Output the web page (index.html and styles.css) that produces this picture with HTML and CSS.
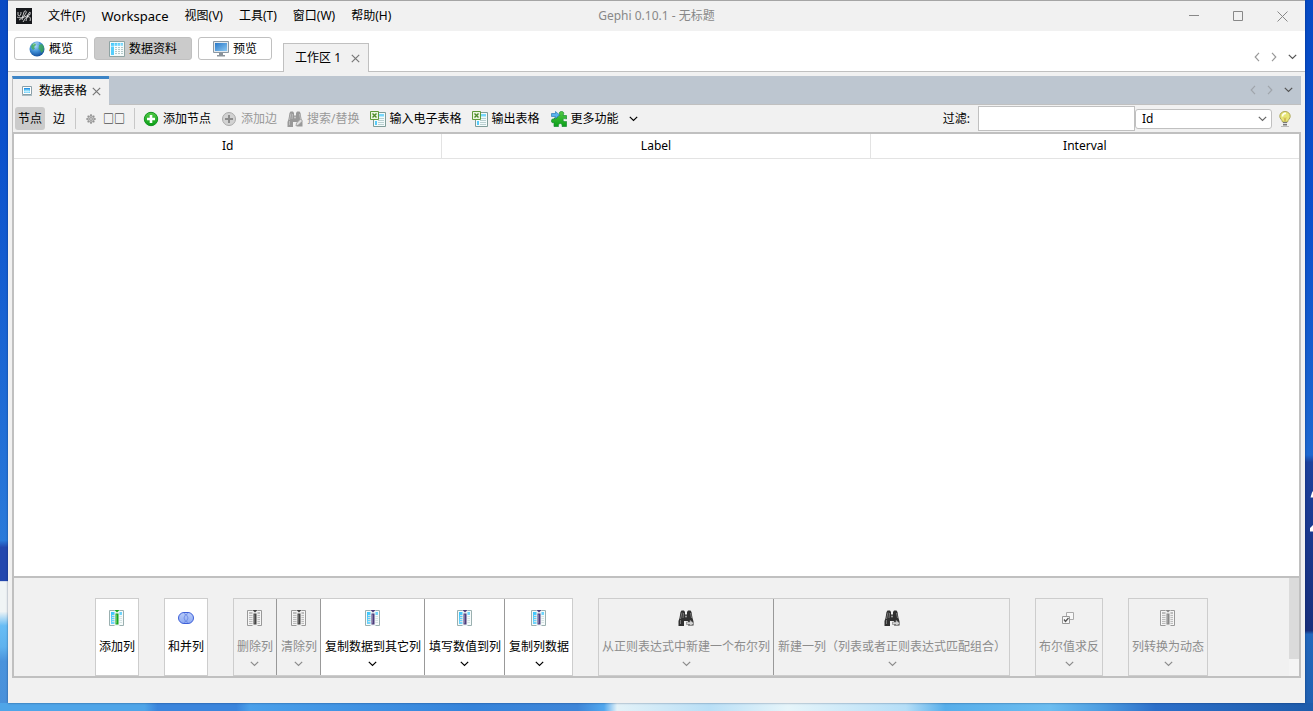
FILE: index.html
```html
<!DOCTYPE html>
<html lang="zh-CN">
<head>
<meta charset="utf-8">
<meta name="viewport" content="width=device-width, initial-scale=1">
<title>Gephi 0.10.1 - 无标题</title>
<link rel="stylesheet" href="styles.css">
</head>
<body>
<svg class="defs" aria-hidden="true">
  <defs>
    <linearGradient id="cyan" x1="0" y1="0" x2="1" y2="1"><stop offset="0" stop-color="#35c3fb"/><stop offset="1" stop-color="#a5e4fd"/></linearGradient>
    <radialGradient id="globe" cx=".4" cy=".3" r=".75"><stop offset="0" stop-color="#a9d8f8"/><stop offset=".5" stop-color="#3f8fd6"/><stop offset="1" stop-color="#0d4797"/></radialGradient>
    <linearGradient id="green" x1="0" y1="0" x2="0" y2="1"><stop offset="0" stop-color="#52c945"/><stop offset="1" stop-color="#0a9f18"/></linearGradient>
    <linearGradient id="screen" x1="0" y1="0" x2="1" y2="1"><stop offset="0" stop-color="#2878c8"/><stop offset="1" stop-color="#8cc8f2"/></linearGradient>
    <linearGradient id="venn" x1="0" y1="0" x2="0" y2="1"><stop offset="0" stop-color="#b9ccfa"/><stop offset="1" stop-color="#8daaf2"/></linearGradient>
  </defs>
  <symbol id="i-chev" viewBox="0 0 9 6"><path d="M.8.8 4.5 4.5 8.2.8" fill="none" stroke="currentColor" stroke-width="1.2"/></symbol>
  <symbol id="i-left" viewBox="0 0 6 10"><path d="M5 .8 1.2 5 5 9.2" fill="none" stroke="currentColor" stroke-width="1.2"/></symbol>
  <symbol id="i-right" viewBox="0 0 6 10"><path d="M1 .8 4.8 5 1 9.2" fill="none" stroke="currentColor" stroke-width="1.2"/></symbol>
  <symbol id="i-x" viewBox="0 0 9 9"><path d="M.8.8 8.2 8.2M8.2.8.8 8.2" fill="none" stroke="currentColor" stroke-width="1.2"/></symbol>
  <symbol id="i-table" viewBox="0 0 16 16">
    <path d="M.5.5h15v15H.5z" fill="#f4fafa" stroke="#8fa3a3"/><path d="M2 2h12v3H2z" fill="url(#cyan)"/><path d="M2 5h3v9H2z" fill="#55cdfb"/>
    <path d="M6 6.500h2M9 6.500h2M12 6.500h2M6 8.500h2M9 8.500h2M12 8.500h2M6 10.500h2M9 10.500h2M12 10.500h2M6 12.500h2M9 12.500h2M12 12.500h2" stroke="#b3c9cb"/><path d="M2 5.500h12M5.500 2v12M8.500 2v12M11.500 2v12" stroke="#fff" stroke-opacity=".5"/>
  </symbol>
  <symbol id="i-globe" viewBox="0 0 16 16"><circle cx="8" cy="8" r="7.5" fill="url(#globe)"/><path d="M2 6c0-2 2-4 4-4l1 2-2 2 1 1.500L4 9zM10 4l3-1 2 3-.5 4-2 2-1.500-3-1.500-1z" fill="#3fae42" fill-opacity=".7"/><path d="M4 3.500Q7 1 10 2" fill="none" stroke="#fff" stroke-opacity=".45"/></symbol>
  <symbol id="i-monitor" viewBox="0 0 16 16"><path d="M.5.5h15v11H.5z" fill="#e4e9ed" stroke="#8b98a3"/><path d="M2 2h12v8H2z" fill="url(#screen)"/><path d="M6 12h4v2h2v1.500H4V14h2z" fill="#8b939a"/></symbol>
  <symbol id="i-small-table" viewBox="0 0 10 10"><path d="M.5.5h9v8h-9z" fill="#fff" stroke="#8a9fa8"/><path d="M2 2h6v5H2z" fill="#6ad0fa"/><path d="M2 2h6v1.500H2z" fill="#2793e6"/><path d="M2 5.500h6M4 3.500v4M6 3.500v4" stroke="#eafaff" stroke-width=".6"/><path d="M0 9.500h10" stroke="#a9bbc0"/></symbol>
  <symbol id="i-gear" viewBox="0 0 10 10"><path d="M5 .3v9.400M.3 5h9.400M1.700 1.700l6.600 6.600M8.300 1.700 1.700 8.300" stroke="#8a8a8a" stroke-width="1.500"/><circle cx="5" cy="5" r="3.300" fill="#c6c6c6" stroke="#8a8a8a" stroke-width=".7"/><circle cx="5" cy="5" r="1.300" fill="#f3f3f3" stroke="#777" stroke-width=".7"/></symbol>
  <symbol id="i-plus" viewBox="0 0 16 16"><circle cx="8" cy="8" r="6.700" fill="url(#green)" stroke="#139421"/><path d="M8 4v8M4 8h8" stroke="#fff" stroke-width="2.600"/></symbol>
  <symbol id="i-plus-off" viewBox="0 0 16 16"><circle cx="8" cy="8" r="6.500" fill="#d2d2d2" stroke="#aaa"/><path d="M8 4v8M4 8h8" stroke="#8c8c8c" stroke-width="2"/></symbol>
  <symbol id="i-bino" viewBox="0 0 16 16">
    <path d="M2.500 2 3.500.5h2.500L7 2v2.500h2V2L10 .5h2.500l1 1.500 1 6 1 3.500V15.500H10V11H6v5H.5v-5l1-3z" fill="currentColor"/><path d="M4 2.500 2.500 9M12.500 3 13.500 8M2.500 10v4M5.500 3 5 8" fill="none" stroke="#fff" stroke-opacity=".35"/><circle cx="8" cy="6.500" r="1" fill="#eee" fill-opacity=".6"/>
  </symbol>
  <symbol id="i-pencil" viewBox="0 0 16 16"><path d="m9 15 .5-3 4-4 2 2-4 4z" fill="#e0e0e0" stroke="#999" stroke-width=".8"/></symbol>
  <symbol id="i-arrow" viewBox="0 0 16 16"><path d="M8.500 12h3.500v-2l4 3.500-4 2.500v-1.500H8.500z" fill="#d2d2d2" stroke="#777" stroke-width=".6"/></symbol>
  <symbol id="i-sheet" viewBox="0 0 16 16">
    <path d="M3.500 1.500h12v14h-12z" fill="#f3fbfb" stroke="#7f9c98"/><path d="M9 3h5v2.500H9z" fill="#77d6fb"/><path d="M5 10h2v4H5z" fill="#58cbf9"/><path d="M8 7.500h6M8 9.500h6M8 11.500h6M8 13.500h6" stroke="#b9cfd0"/>
    <path d="M.5.5h8v8h-8z" fill="#e9f5df" stroke="#5e9a3a"/><path d="m2.500 2.500 4 4M6.500 2.500l-4 4" stroke="#4e8b2c" stroke-width="1.400"/>
  </symbol>
  <symbol id="i-puzzle" viewBox="0 0 16 16"><path d="M6 4.500h3C7.500 2 8.500.5 10.500.5s3 1.500 1.500 4h3.500v3.500c-2.500-1-3.500 0-3.500 1s1 2 3.500 1.500v5H11c.5-2-.5-3-1.700-3s-2.300 1-1.800 3H3v-4c-2 .5-2.500 0-2.500-1.500S1 7.500 3 8.500V7h3z" fill="url(#green)" stroke="#168b32" stroke-width=".7"/><path d="M.5 2.500h4V.500l4 3.500-4 3.500v-2h-4z" fill="#58b3ee" stroke="#2978b8" stroke-width=".7"/></symbol>
  <symbol id="i-bulb" viewBox="0 0 12 16"><path d="M6 .5C2.800.5.8 2.700.8 5.300c0 2.500 2.200 3.200 2.700 5.700h5c.5-2.500 2.700-3.200 2.700-5.700C11.200 2.700 9.200.5 6 .5z" fill="#e8e676" stroke="#aaa456"/><path d="M3.500 5.500C3.500 3.500 5 2 7 2.500" fill="none" stroke="#fffff0" stroke-width="1.600"/><path d="M5 6.500 6 10l1-3.500" fill="none" stroke="#c69e45" stroke-width=".7"/><path d="M4 11h4v3.500H4z" fill="#777"/><path d="M4 12.500h4" stroke="#ddd"/><path d="M2 15.500h8" stroke="#bbb"/></symbol>
  <symbol id="i-col" viewBox="0 0 16 16"><path d="M.5.5h14v15H.5z" fill="#f6fbfb" stroke="#9bb0b0"/><path d="M2 2h4v12H2zM10 2h3v3h-3z" fill="url(#cyan)"/><path d="M3 5.500h3M3 7.500h3M3 9.500h3M3 11.500h3M10 6.500h3M10 8.500h3M10 10.500h3M10 12.500h3" stroke="#d5e3e3"/><path d="M5.500 0h5v16h-5z" fill="#edf4f4"/><path d="M6.500 3.500h3v11h-3z" fill="currentColor"/><path d="M5.500 0h5L8 2.500z" fill="currentColor"/><path d="M7.500 4.500v9" stroke="#fff" stroke-opacity=".3"/></symbol>
  <symbol id="i-col-off" viewBox="0 0 16 16"><path d="M.5.5h14v15H.5z" fill="#f6f6f6" stroke="#999"/><path d="M2 2h4v12H2zM10 2h3v12h-3z" fill="#bcbcbc"/><path d="M2 4.500h4M2 6.500h4M2 8.500h4M2 10.500h4M2 12.500h4M10 4.500h3M10 6.500h3M10 8.500h3M10 10.500h3M10 12.500h3" stroke="#eee"/><path d="M5.500 0h5v16h-5z" fill="#ededed"/><path d="M6.500 3.500h3v11h-3z" fill="currentColor"/><path d="M5.500 0h5L8 2.500z" fill="currentColor"/><path d="M7.500 4.500v9" stroke="#fff" stroke-opacity=".2"/></symbol>
  <symbol id="i-venn" viewBox="0 0 16 16"><rect x=".5" y="2.500" width="15" height="11" rx="5.500" fill="url(#venn)" stroke="#3d5fd8"/><path d="M10 3.500A5.500 5.500 0 0 0 6 8a5.500 5.500 0 0 0 4 4.500M6 3.500A5.500 5.500 0 0 1 10 8a5.500 5.500 0 0 1-4 4.500" fill="none" stroke="#6684e2" stroke-width=".8"/></symbol>
  <symbol id="i-checks" viewBox="0 0 16 16"><path d="M5.500 2.500h7v7h-7z" fill="#f8f8f8" stroke="#aaa"/><path d="M1.500 6.500h7v7h-7z" fill="#f8f8f8" stroke="#999"/><path d="m3 9.500 1.500 2L7.500 8" fill="none" stroke="#555" stroke-width="1.300"/></symbol>
  <symbol id="i-logo" viewBox="0 0 16 16"><path d="M0 0h16v16H0z" fill="#16181c"/><path d="M2 4v3c1 2 3 1 3-3M3 12c3-1 4-4 5-8 1-2 3-1 2 1S7 9 6 12M10 13c1-4 2-8 4-9 1 2-1 4-3 5 3-1 4 1 3 4M1 9c4 2 8 0 13-3M7 14c2-3 3-5 5-6" fill="none" stroke="#f0f0f0" stroke-width=".8"/></symbol>
</svg>

<svg class="edge-mark" viewBox="0 0 3 41" aria-hidden="true"><path d="M.5 6.500 2 1.500 3 0v6.500zM0 40.500v-3.500l3-3v6.500z" fill="#fff"/></svg>

<div class="window">
  <header class="titlebar">
    <nav class="menu">
      <svg class="i16 logo"><use href="#i-logo"/></svg>
      <button>文件(F)</button><button class="latin">Workspace</button><button>视图(V)</button><button>工具(T)</button><button>窗口(W)</button><button>帮助(H)</button>
    </nav>
    <h1 class="title">Gephi 0.10.1 - 无标题</h1>
    <div class="controls">
      <button aria-label="最小化"><svg viewBox="0 0 11 11"><path d="M0 4.500h10" stroke="#888"/></svg></button>
      <button aria-label="最大化"><svg viewBox="0 0 11 11"><path d="M.5.5h9v9h-9z" fill="none" stroke="#888"/></svg></button>
      <button aria-label="关闭"><svg viewBox="0 0 11 11"><path d="m.5.5 10 10m0-10-10 10" stroke="#888"/></svg></button>
    </div>
  </header>

  <div class="modes">
    <div class="mode-buttons">
      <button class="mode"><svg class="i16"><use href="#i-globe"/></svg>概览</button>
      <button class="mode on"><svg class="i16"><use href="#i-table"/></svg>数据资料</button>
      <button class="mode"><svg class="i16"><use href="#i-monitor"/></svg>预览</button>
    </div>
    <div class="workspace-tab"><span>工作区 1</span><button aria-label="关闭工作区"><svg class="x"><use href="#i-x"/></svg></button></div>
    <div class="tab-nav">
      <button aria-label="上一个"><svg class="side"><use href="#i-left"/></svg></button>
      <button aria-label="下一个"><svg class="side"><use href="#i-right"/></svg></button>
      <button class="list" aria-label="列表"><svg class="chev"><use href="#i-chev"/></svg></button>
    </div>
  </div>

  <main class="panel">
    <div class="panel-tabs">
      <div class="panel-tab"><svg class="i10"><use href="#i-small-table"/></svg><span>数据表格</span><button aria-label="关闭"><svg class="x"><use href="#i-x"/></svg></button></div>
      <div class="tab-nav">
        <button aria-label="上一个"><svg class="side"><use href="#i-left"/></svg></button>
        <button aria-label="下一个"><svg class="side"><use href="#i-right"/></svg></button>
        <button class="list" aria-label="列表"><svg class="chev"><use href="#i-chev"/></svg></button>
      </div>
    </div>

    <div class="toolbar">
      <button class="toggle on">节点</button>
      <button class="toggle">边</button>
      <span class="sep"></span>
      <button class="tool config"><svg class="i10"><use href="#i-gear"/></svg><span>□□</span></button>
      <span class="sep"></span>
      <div class="tools">
        <button class="tool"><svg class="i16"><use href="#i-plus"/></svg>添加节点</button>
        <button class="tool" disabled><svg class="i16"><use href="#i-plus-off"/></svg>添加边</button>
        <button class="tool" disabled><svg class="i16"><use href="#i-bino"/><use href="#i-pencil"/></svg>搜索/替换</button>
        <button class="tool"><svg class="i16"><use href="#i-sheet"/></svg>输入电子表格</button>
        <button class="tool"><svg class="i16"><use href="#i-sheet"/></svg>输出表格</button>
        <button class="tool more"><svg class="i16"><use href="#i-puzzle"/></svg>更多功能<svg class="chev"><use href="#i-chev"/></svg></button>
      </div>
      <div class="filter">
        <label for="filter-text">过滤:</label>
        <input id="filter-text" type="text">
        <div class="select-box">
          <select aria-label="过滤列"><option>Id</option><option>Label</option><option>Interval</option></select>
          <svg class="chev"><use href="#i-chev"/></svg>
        </div>
        <button class="bulb" aria-label="提示"><svg><use href="#i-bulb"/></svg></button>
      </div>
    </div>

    <div class="data">
      <table>
        <thead><tr><th>Id</th><th>Label</th><th>Interval</th></tr></thead>
      </table>
    </div>

    <div class="actions">
      <div class="groups">
        <div class="group"><button class="action"><svg class="i16 c-green"><use href="#i-col"/></svg><span>添加列</span></button></div>
        <div class="group"><button class="action"><svg class="i16"><use href="#i-venn"/></svg><span>和并列</span></button></div>
        <div class="group">
          <button class="action" disabled><svg class="i16 c-dark"><use href="#i-col-off"/></svg><span>删除列</span><svg class="chev"><use href="#i-chev"/></svg></button>
          <button class="action" disabled><svg class="i16 c-dark"><use href="#i-col-off"/></svg><span>清除列</span><svg class="chev"><use href="#i-chev"/></svg></button>
          <button class="action"><svg class="i16 c-purple"><use href="#i-col"/></svg><span>复制数据到其它列</span><svg class="chev"><use href="#i-chev"/></svg></button>
          <button class="action"><svg class="i16 c-purple"><use href="#i-col"/></svg><span>填写数值到列</span><svg class="chev"><use href="#i-chev"/></svg></button>
          <button class="action"><svg class="i16 c-purple"><use href="#i-col"/></svg><span>复制列数据</span><svg class="chev"><use href="#i-chev"/></svg></button>
        </div>
        <div class="group">
          <button class="action" disabled><svg class="i16 c-black"><use href="#i-bino"/><use href="#i-arrow"/></svg><span>从正则表达式中新建一个布尔列</span><svg class="chev"><use href="#i-chev"/></svg></button>
          <button class="action" disabled><svg class="i16 c-black"><use href="#i-bino"/><use href="#i-arrow"/></svg><span>新建一列（列表或者正则表达式匹配组合）</span><svg class="chev"><use href="#i-chev"/></svg></button>
        </div>
        <div class="group"><button class="action" disabled><svg class="i16"><use href="#i-checks"/></svg><span>布尔值求反</span><svg class="chev"><use href="#i-chev"/></svg></button></div>
        <div class="group"><button class="action" disabled><svg class="i16 c-grey"><use href="#i-col-off"/></svg><span>列转换为动态</span><svg class="chev"><use href="#i-chev"/></svg></button></div>
      </div>
      <div class="scrollbar"><div class="thumb"></div></div>
    </div>
  </main>
  <footer class="status"></footer>
</div>
</body>
</html>
```
FILE: styles.css
```css
* { box-sizing: border-box; }

body {
  margin: 0;
  min-height: 100vh;
  padding: 0 8px 8px;
  display: flex;
  font: 12px/16px "Noto Sans", "Noto Sans CJK SC", sans-serif;
  color: #000;
  background:
    linear-gradient(90deg, #4fa5e8 0, #4fa5e8 11%, #3b85dc 12%, #3b85dc 18%, #4aa0ea 19%, #3583da 36%, #3f86d8 44%, #52a8ee 46%, #e3f2f8 47%, #b9dff6 54%, #e6f5fa 60%, #b5def7 69%, #57aeea 72%, #6cbdf0 80%, #4c9ce0 84%, #2c6fc9 88%, #1e5cab 100%) left bottom / 100% 8px no-repeat,
    linear-gradient(180deg, #0a4bc4 0, #0a50cc 20%, #2a7ada 76%, #2347ae 77%, #2347ae 81.700%, #f0f4f5 81.800%, #f0f4f5 86%, #68bdf5 88%, #5fb2ee 91%, #4a93dc 93%, #4990da 100%) left top / 8px 100% no-repeat,
    linear-gradient(180deg, #064ac4 0, #0a50cc 30%, #1d68d0 64%, #1c419c 65%, #182f7c 88.700%, #2268bd 89.200%, #2060b0 100%) right top / 8px 100% no-repeat,
    #0a50cc;
}

button, input, select { font: inherit; color: inherit; }
button { margin: 0; padding: 0; border: 0; background: none; display: flex; align-items: center; white-space: nowrap; }
svg { display: block; flex: none; }

.defs { position: absolute; width: 0; height: 0; }
.edge-mark { position: absolute; right: 0; top: 491px; width: 3px; height: 41px; }

.i16 { width: 16px; height: 16px; }
.i10 { width: 10px; height: 10px; }
.x { width: 9px; height: 9px; color: #777; }
.chev { width: 9px; height: 6px; }
.side { width: 6px; height: 10px; }

.window {
  flex: 1;
  min-width: 0;
  display: flex;
  flex-direction: column;
  border-top: 1px solid #a5a5a5;
  background: #f1f1f1;
  box-shadow: 0 0 2px rgba(0, 20, 60, .5);
}

.titlebar { height: 30px; display: grid; grid-template-columns: 1fr auto 1fr; align-items: center; }
.menu { display: flex; align-items: center; gap: 16px; padding-left: 8px; }
.menu .latin { font-size: 13px; }
.title { margin: 0; font-size: 12px; font-weight: 400; color: #888; }
.controls { display: flex; justify-content: flex-end; gap: 33px; padding-right: 17px; }
.controls svg { width: 11px; height: 11px; fill: none; }

.modes { height: 41px; display: flex; align-items: flex-start; background: linear-gradient(#fff 40px, #c0c0c0 40px); }
.mode-buttons { display: flex; gap: 6px; padding: 6px 11px 0 6px; }
.mode { height: 23px; padding: 0 14px; gap: 4px; border: 1px solid #c0c0c0; border-radius: 3px; background: #fff; }
.mode.on { background: #cbcbcb; }
.workspace-tab {
  align-self: flex-end;
  height: 29px;
  display: flex;
  align-items: center;
  gap: 10px;
  padding: 0 8px 0 11px;
  border: 1px solid #c0c0c0;
  border-bottom: 0;
  background: #f1f1f1;
}
.tab-nav { margin-left: auto; display: flex; align-items: center; gap: 11px; color: #999; }
.tab-nav .list { color: #555; }
.modes .tab-nav { height: 12px; margin-top: 20px; padding-right: 8px; }

.panel { flex: 1; display: flex; flex-direction: column; margin: 4px 4px 0; }
.panel-tabs { height: 29px; display: flex; align-items: center; padding-right: 8px; background: #bdc6d0; border-bottom: 1px solid #c0c0c0; }
.panel-tab {
  align-self: stretch;
  display: flex;
  align-items: center;
  margin-bottom: -1px;
  padding: 0 8px 2px 9px;
  border-top: 3px solid #3c84c6;
  border-left: 1px solid #c0c0c0;
  background: #f1f1f1;
}
.panel-tab span { padding: 0 5px 0 7px; }
.panel-tabs .tab-nav { color: #a0a5ab; }

.toolbar { height: 27px; display: flex; align-items: center; padding: 0 10px 0 2px; border-left: 1px solid #c0c0c0; }
.toggle { height: 23px; padding: 0 8px; border-radius: 3px; }
.toggle.on { padding: 0 3px; background: #cbcbcb; }
.sep { width: 1px; height: 21px; background: #c8c8c8; margin: 0 8px 0 2px; }
.config { padding: 0 7px 0 2px; }
.config.tool { gap: 7px; }
.config span { font-size: 11px; }
.tools { display: flex; gap: 10px; }
.tool { gap: 4px; }
.tool:disabled { color: #999; }
.tool.more { padding-left: 1px; }
.tool .chev { margin-left: 6px; }
.filter { margin-left: auto; display: flex; align-items: center; }
.filter label { margin-right: 8px; }
.filter input { width: 157px; height: 25px; padding: 0 5px; border: 1px solid #c0c0c0; background: #fff; }
.select-box { display: grid; align-items: center; }
.select-box > * { grid-area: 1 / 1; }
.select-box select { width: 137px; height: 20px; padding: 0 6px; border: 1px solid #c0c0c0; border-radius: 3px; background: #fff; appearance: none; }
.select-box .chev { justify-self: end; margin-right: 5px; color: #666; pointer-events: none; }
.bulb { margin-left: 7px; }
.bulb svg { width: 12px; height: 16px; }

.data { flex: 1; border: 2px solid #c0c0c0; background: #fff; }
.data table { width: 100%; table-layout: fixed; border-collapse: separate; border-spacing: 0; }
.data th { height: 25px; padding: 0; font-weight: 400; border-bottom: 1px solid #e3e3e3; border-right: 1px solid #e3e3e3; }
.data th:last-child { border-right: 0; }

.actions { display: flex; border: solid #c0c0c0; border-width: 0 2px 2px; }
.groups { flex: 1; display: flex; justify-content: center; gap: 25px; padding-top: 20px; }
.group { display: flex; border: 1px solid #cdcdcd; }
.action { height: 76px; flex-direction: column; padding: 11px 3px 0; background: #fff; }
.action + .action { padding-left: 4px; border-left: 1px solid #999; }
.action span { margin: 13px 0 6px; }
.action:disabled { color: #8c8c8c; background: #f1f1f1; }
.action .c-green { color: #18a51c; }
.action .c-purple { color: #4c3b7c; }
.action .c-dark { color: #444; }
.action .c-grey { color: #888; }
.action .c-black { color: #303030; }
.scrollbar { width: 10px; background: #f4f4f4; }
.thumb { height: 83%; background: #dbdbdb; }

.status { height: 25px; }
```
